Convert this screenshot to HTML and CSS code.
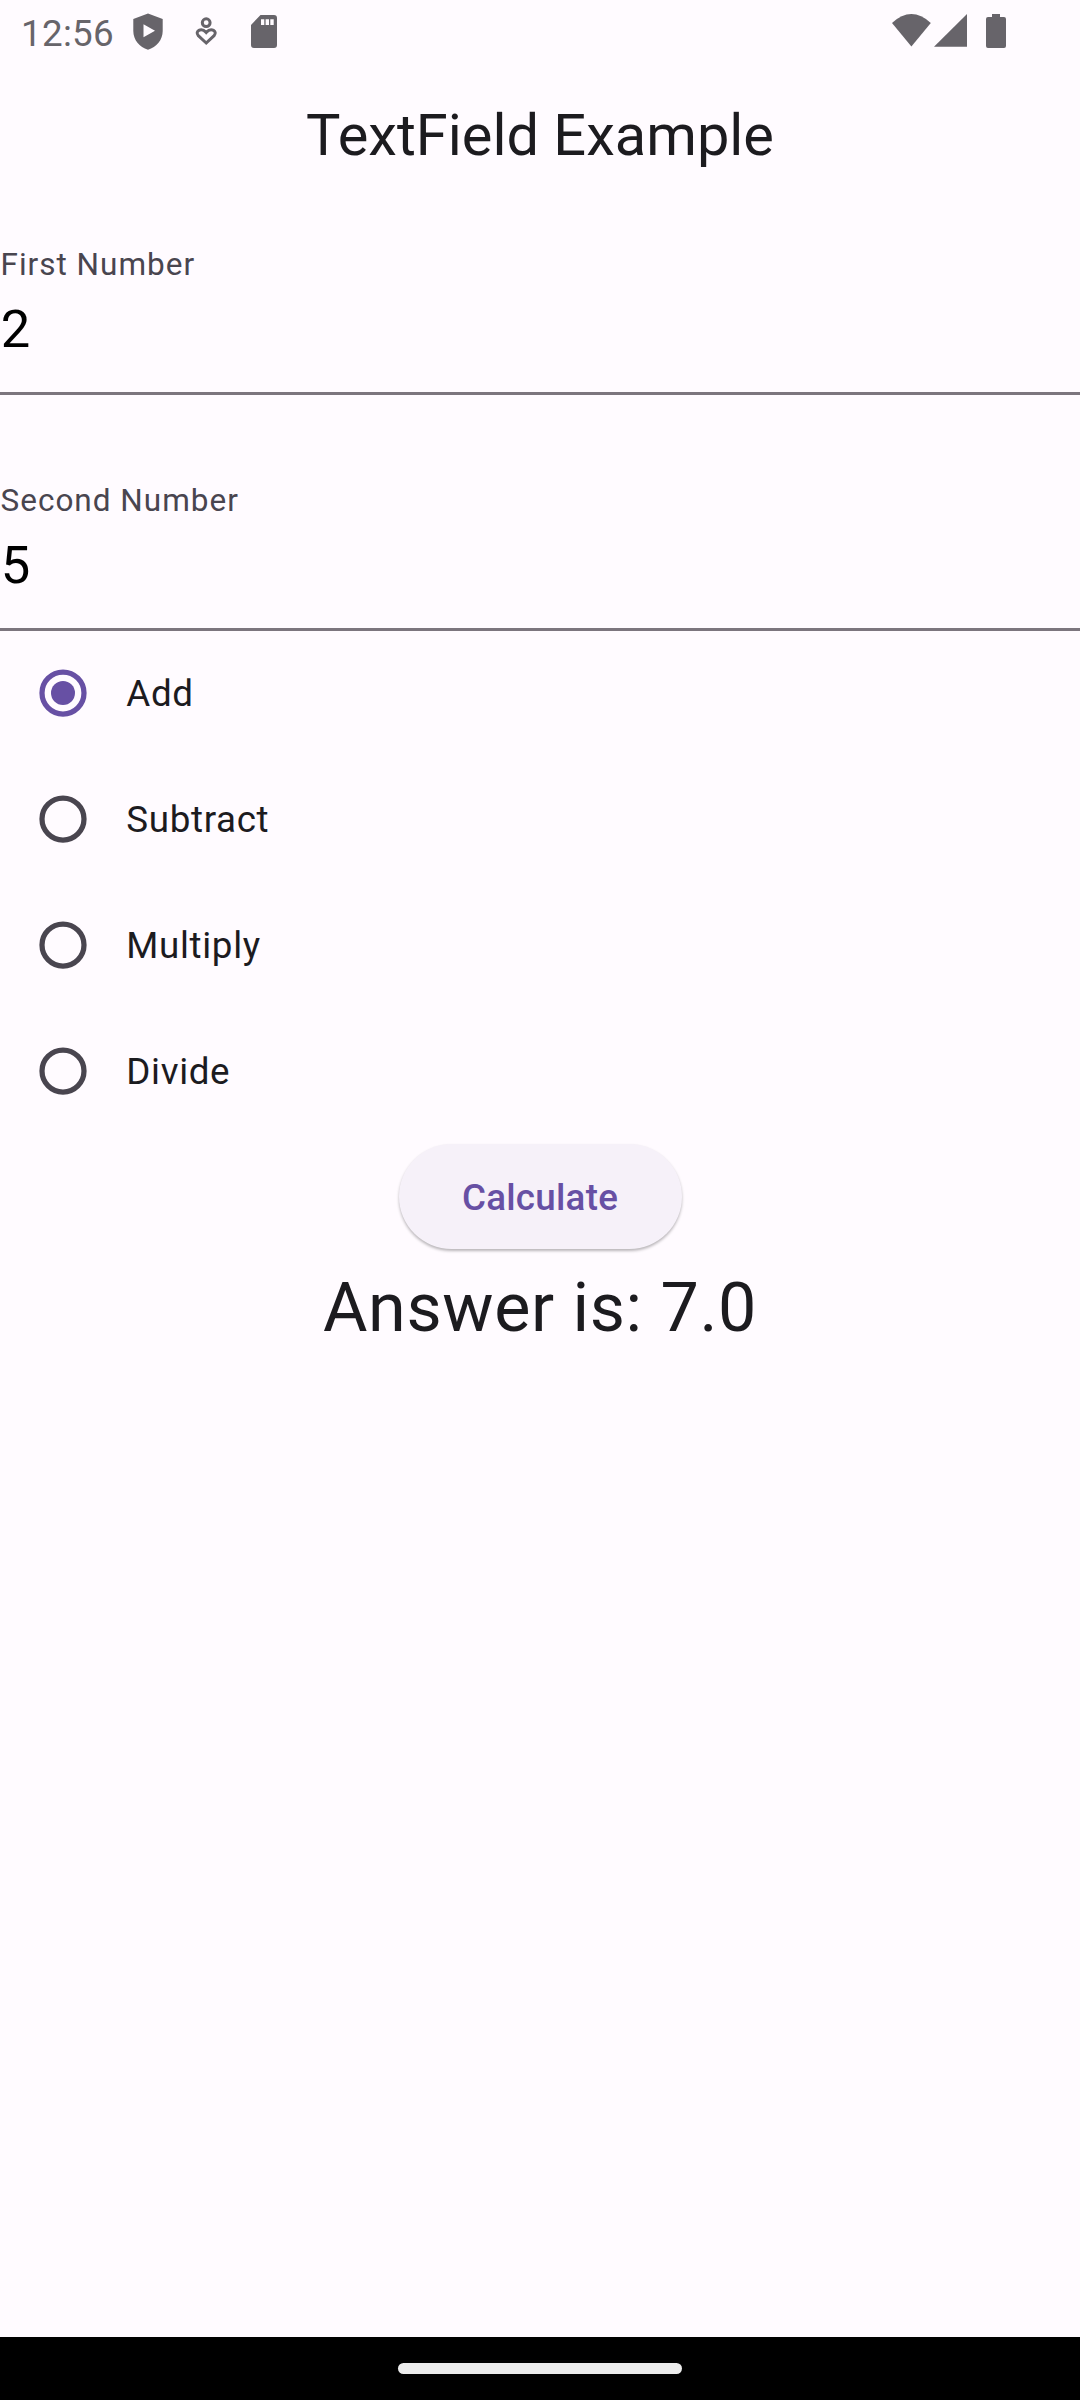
FILE: index.html
```html
<!DOCTYPE html>
<html lang="en">
<head>
<meta charset="utf-8">
<title>TextField Example</title>
<link rel="stylesheet" href="styles.css">
</head>
<body>
<div class="screen">
  <header class="status">
    <span class="clock">12:56</span>
    <svg class="status-left" width="150" height="63" viewBox="0 0 150 63">
      <path fill-rule="evenodd" d="M18 13.500L32.700 19V31C32.700 40 26.500 47 18 49.700C9.500 47 3.300 40 3.300 31V19ZM13.500 24.300V37.300L25 30.800Z"/>
      <g class="line"><circle cx="76.200" cy="22.700" r="3.900"/><path d="M76.200 43L68.300 35.700C64.500 31.500 71 26.700 76.200 32.500C81.400 26.700 87.900 31.500 84.100 35.700Z"/></g>
      <path fill-rule="evenodd" d="M130.500 15H144Q147 15 147 18V45Q147 48 144 48H124Q121 48 121 45V25ZM131 19.300V25H134.300V19.300ZM135.600 19.300V25H139V19.300ZM140.300 19.300V25H143.700V19.300Z"/>
    </svg>
    <svg class="status-right" width="124" height="63" viewBox="0 0 124 63">
      <path d="M0 23Q19.400 5.200 38.800 23L19.400 46.500Z"/>
      <path d="M42 46.800L75 14V46.800Z"/>
      <path d="M100 14H108V17H112Q114 17 114 19V46Q114 48 112 48H96Q94 48 94 46V19Q94 17 96 17H100Z"/>
    </svg>
  </header>
  <h1 class="title">TextField Example</h1>
  <main>
    <div class="field"><span class="label">First Number</span><span class="value">2</span></div>
    <div class="field"><span class="label">Second Number</span><span class="value">5</span></div>
    <div class="options">
      <div class="option"><svg class="radio selected" viewBox="0 0 48 48"><circle class="ring" cx="24" cy="24" r="21"/><circle class="dot" cx="24" cy="24" r="12"/></svg><span>Add</span></div>
      <div class="option"><svg class="radio" viewBox="0 0 48 48"><circle class="ring" cx="24" cy="24" r="21"/></svg><span>Subtract</span></div>
      <div class="option"><svg class="radio" viewBox="0 0 48 48"><circle class="ring" cx="24" cy="24" r="21"/></svg><span>Multiply</span></div>
      <div class="option"><svg class="radio" viewBox="0 0 48 48"><circle class="ring" cx="24" cy="24" r="21"/></svg><span>Divide</span></div>
    </div>
    <button class="calculate">Calculate</button>
    <p class="answer">Answer is: 7.0</p>
  </main>
  <footer class="nav"><span class="handle"></span></footer>
</div>
</body>
</html>
```
FILE: styles.css
```css
* { box-sizing: border-box; }
body { margin: 0; font-family: Roboto, sans-serif; background: #fffbff; color: #1c1b1f; }
.screen { height: 2400px; display: flex; flex-direction: column; }
.status { height: 63px; display: flex; padding: 0 64px 0 21px; color: #67646a; }
.clock { width: 109px; font-size: 36.75px; line-height: 67px; letter-spacing: .3px; }
.status svg { display: block; fill: #67646a; }
.status-right { margin-left: auto; }
.status .line { fill: none; stroke: #67646a; stroke-width: 3; }
.title { margin: 0; height: 144px; line-height: 144px; font-size: 57.75px; font-weight: 400; text-align: center; }
main { flex: 1; display: flex; flex-direction: column; padding-top: 36px; }
.field { height: 152px; margin-bottom: 84px; padding-top: 1px; border-bottom: 3px solid #7c757e; display: flex; flex-direction: column; }
.field + .field { margin-bottom: 0; }
.label { padding-left: .5px; color: #49454f; font-size: 31.5px; line-height: 42px; letter-spacing: 1px; }
.value { padding-left: .7px; color: #000; font-size: 52.5px; line-height: 63px; margin-top: 12px; }
.options { margin-top: -1px; }
.option { height: 126px; padding-left: 39px; display: flex; align-items: center; gap: 39.3px; font-size: 36.75px; letter-spacing: .66px; }
.radio { width: 48px; height: 48px; fill: none; color: #49454f; }
.radio.selected { color: #6750a4; }
.ring { stroke: currentColor; stroke-width: 5.25; }
.dot { fill: currentColor; }
.calculate { align-self: center; width: 283px; height: 105px; margin: 10px 0 0; padding: 2px 0 0; border: 0; border-radius: 53px; background: #f6f1f9; color: #6750a4; font: 500 36.75px/103px Roboto, sans-serif; letter-spacing: .26px; box-shadow: 0 2px 3px rgba(0,0,0,.28); }
.answer { margin: 13px 0 0; line-height: 93px; font-size: 68.25px; text-align: center; letter-spacing: .66px; }
.nav { height: 63px; background: #000; display: flex; justify-content: center; padding-top: 26px; }
.handle { width: 284px; height: 11px; border-radius: 6px; background: #ececec; }
```
